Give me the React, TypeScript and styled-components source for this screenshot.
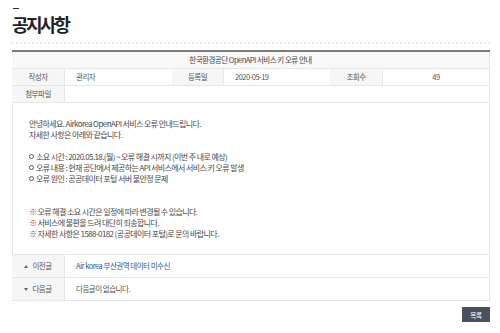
import React from 'react';
import styled, { createGlobalStyle } from 'styled-components';

const GlobalStyle = createGlobalStyle`
  body {
    margin: 0;
    background: #fff;
    font-family: 'Noto Sans CJK KR', 'Noto Sans', sans-serif;
    color: #555;
  }
`;

const Page = styled.div`
  width: 478px;
  padding: 8px 10px 0 12px;
`;

const TitleArea = styled.div`
  padding-bottom: 7px;
  border-bottom: 2px dotted #ececec;

  &::before {
    content: '';
    display: block;
    width: 6px;
    height: 1px;
    margin-left: 1px;
    background: #333;
  }

  h2 {
    margin: 5px 0 0;
    font-size: 18px;
    line-height: 21px;
    font-weight: 700;
    letter-spacing: -2.5px;
    color: #222;
  }
`;

const Board = styled.div`
  margin-top: 6px;
  border-top: 2px solid #7a7a7a;
  font-size: 7.5px;
  letter-spacing: -0.5px;
`;

const Subject = styled.div`
  height: 16px;
  line-height: 16px;
  text-align: center;
  background: #f8f8f8;
  border-bottom: 1px solid #e6e6e6;
  border-right: 1px solid #e6e6e6;
  color: #444;
`;

const InfoRow = styled.div`
  display: grid;
  grid-template-columns: 53px 107px 52px 106px 53px 1fr;
  border-bottom: 1px solid #e6e6e6;
  border-right: 1px solid #e6e6e6;
`;

const Cell = styled.div<{ $label?: boolean; $center?: boolean }>`
  height: 16px;
  line-height: 16px;
  padding: 0 ${(p) => (p.$label || p.$center ? 0 : 11)}px;
  text-align: ${(p) => (p.$label || p.$center ? 'center' : 'left')};
  background: ${(p) => (p.$label ? '#f6f6f6' : '#fff')};
  border-right: ${(p) => (p.$label ? '1px solid #e6e6e6' : 'none')};
  color: #555;
`;

const FileRow = styled(InfoRow)`
  grid-template-columns: 53px 1fr;
`;

const Content = styled.div`
  padding: 15px 17px 15px 16px;
  border-left: 1px solid #e6e6e6;
  border-right: 1px solid #e6e6e6;
  border-bottom: 1px solid #e6e6e6;
  font-size: 8px;
  line-height: 11px;
  letter-spacing: -0.6px;
  color: #484848;

  p {
    margin: 0;
    min-height: 11px;
  }
`;

const Bullet = styled.span`
  display: inline-block;
  width: 3px;
  height: 3px;
  margin-right: 2px;
  border: 0.8px solid #555;
  border-radius: 50%;
  vertical-align: 1px;
`;

const NavList = styled.div`
  font-size: 7.5px;
  letter-spacing: -0.5px;
`;

const NavRow = styled.div`
  display: grid;
  grid-template-columns: 53px 1fr;
  border-bottom: 1px solid #e6e6e6;
  border-right: 1px solid #e6e6e6;
  height: 22px;
  line-height: 22px;
`;

const NavLabel = styled.div`
  background: #f6f6f6;
  border-right: 1px solid #e6e6e6;
  text-align: center;
  color: #555;
`;

const Arrow = styled.span<{ $down?: boolean }>`
  display: inline-block;
  width: 0;
  height: 0;
  margin-right: 4px;
  vertical-align: middle;
  border-left: 2px solid transparent;
  border-right: 2px solid transparent;
  ${(p) => (p.$down ? 'border-top: 3px solid #666;' : 'border-bottom: 3px solid #666;')}
`;

const NavText = styled.div<{ $link?: boolean }>`
  padding-left: 11px;
  color: ${(p) => (p.$link ? '#2b5b97' : '#555')};
`;

const Actions = styled.div`
  display: flex;
  justify-content: flex-end;
  padding-top: 6px;
`;

const ListButton = styled.button`
  width: 28px;
  height: 15px;
  padding: 0;
  border: none;
  background: #4a5062;
  color: #fff;
  font-family: inherit;
  font-size: 6.5px;
  letter-spacing: -0.3px;
`;

type Line = { text: string; bullet?: boolean };

const bodyLines: Line[] = [
  { text: '안녕하세요. Airkorea OpenAPI 서비스 오류 안내드립니다.' },
  { text: '자세한 사항은 아래와 같습니다.' },
  { text: '' },
  { text: '소요 시간 : 2020.05.18.(월) ~ 오류 해결 시까지 (이번 주 내로 예상)', bullet: true },
  { text: '오류 내용 : 현재 공단에서 제공하는 API 서비스에서 서비스 키 오류 발생', bullet: true },
  { text: '오류 원인 : 공공데이터 포털 서버 불안정 문제', bullet: true },
  { text: '' },
  { text: '' },
  { text: '※ 오류 해결 소요 시간은 일정에 따라 변경될 수 있습니다.' },
  { text: '※ 서비스에 불편을 드려 대단히 죄송합니다.' },
  { text: '※ 자세한 사항은 1588-0182 (공공데이터 포털)로 문의 바랍니다.' },
];

export default function App() {
  return (
    <Page>
      <GlobalStyle />
      <TitleArea>
        <h2>공지사항</h2>
      </TitleArea>

      <Board>
        <Subject>한국환경공단 OpenAPI 서비스 키 오류 안내</Subject>
        <InfoRow>
          <Cell $label>작성자</Cell>
          <Cell>관리자</Cell>
          <Cell $label>등록일</Cell>
          <Cell>2020-05-19</Cell>
          <Cell $label>조회수</Cell>
          <Cell $center>49</Cell>
        </InfoRow>
        <FileRow>
          <Cell $label>첨부파일</Cell>
          <Cell />
        </FileRow>
      </Board>

      <Content>
        {bodyLines.map((line, i) => (
          <p key={i}>
            {line.bullet && <Bullet />}
            {line.text}
          </p>
        ))}
      </Content>

      <NavList>
        <NavRow>
          <NavLabel>
            <Arrow />이전글
          </NavLabel>
          <NavText $link>Air korea 부산권역 데이터 미수신</NavText>
        </NavRow>
        <NavRow>
          <NavLabel>
            <Arrow $down />다음글
          </NavLabel>
          <NavText>다음글이 없습니다.</NavText>
        </NavRow>
      </NavList>

      <Actions>
        <ListButton type="button">목록</ListButton>
      </Actions>
    </Page>
  );
}
